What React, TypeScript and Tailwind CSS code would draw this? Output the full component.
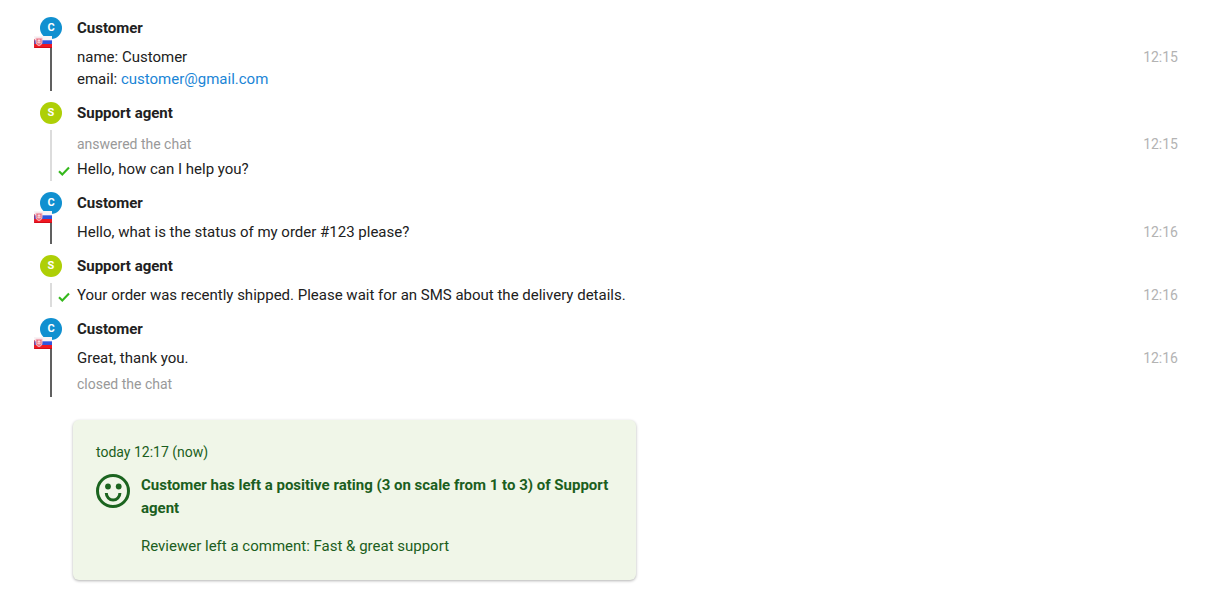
import type { ReactNode } from 'react';
import clsx from 'clsx';

type Row = {
  text: ReactNode;
  event?: boolean;
  delivered?: boolean;
};

type Group = {
  author: 'customer' | 'agent';
  time: string;
  rows: Row[];
};

const groups: Group[] = [
  {
    author: 'customer',
    time: '12:15',
    rows: [
      {
        text: (
          <>
            name: Customer
            <br />
            email:{' '}
            <a href="mailto:customer@gmail.com" className="text-[#1a85d6]">
              customer@gmail.com
            </a>
          </>
        ),
      },
    ],
  },
  {
    author: 'agent',
    time: '12:15',
    rows: [
      { text: 'answered the chat', event: true },
      { text: 'Hello, how can I help you?', delivered: true },
    ],
  },
  {
    author: 'customer',
    time: '12:16',
    rows: [{ text: 'Hello, what is the status of my order #123 please?' }],
  },
  {
    author: 'agent',
    time: '12:16',
    rows: [
      {
        text: 'Your order was recently shipped. Please wait for an SMS about the delivery details.',
        delivered: true,
      },
    ],
  },
  {
    author: 'customer',
    time: '12:16',
    rows: [{ text: 'Great, thank you.' }, { text: 'closed the chat', event: true }],
  },
];

function SlovakFlag() {
  return (
    <svg
      viewBox="0 0 18 12"
      className="absolute -left-1.5 top-[19px] h-3 w-[18px]"
      aria-hidden="true"
    >
      <rect width="18" height="4" fill="#f8f4f6" />
      <rect y="4" width="18" height="4" fill="#2f55dd" />
      <rect y="4" width="18" height="1" fill="#6d88ea" />
      <rect y="8" width="18" height="4" fill="#f01822" />
      <rect y="11" width="18" height="1" fill="#d20c18" />
      <rect y="3" width="1" height="9" fill="#d82840" opacity=".6" />
      <path d="M1.500 1.800h7v4.200c0 2.200-1.500 3.400-3.500 4.200-2-.8-3.500-2-3.500-4.200z" fill="#f2b9c4" />
      <path d="M2.500 2.800h5v3.400c0 1.400-1 2.300-2.500 3-1.500-.7-2.500-1.600-2.500-3z" fill="#ea7484" />
      <path d="M5 3v4.500M3.600 4.500h2.800M3.200 6.200h3.600" stroke="#fbe6ea" strokeWidth=".8" />
    </svg>
  );
}

function Check() {
  return (
    <svg viewBox="0 0 12 10" className="absolute -left-[19px] top-[9px] h-2.5 w-3" aria-label="Delivered">
      <path d="M1 5.200 4.300 8.400 11 1.500" fill="none" stroke="#35b81c" strokeWidth="2.100" />
    </svg>
  );
}

function Smiley() {
  return (
    <svg viewBox="0 0 34 34" className="h-[34px] w-[34px] shrink-0" fill="none" aria-hidden="true">
      <circle cx="17" cy="17" r="15.500" stroke="#1b641f" strokeWidth="3" />
      <circle cx="12" cy="12.500" r="2.900" fill="#1b641f" />
      <circle cx="22.700" cy="12.500" r="2.900" fill="#1b641f" />
      <path d="M10.300 19c0 3.900 3 7.100 6.800 7.100s6.800-3.200 6.800-7.100" stroke="#1b641f" strokeWidth="3" />
    </svg>
  );
}

function MessageGroup({ author, time, rows }: Group) {
  const isCustomer = author === 'customer';
  return (
    <section className="flex gap-[15px]">
      <div className={clsx('relative flex w-[22px] flex-col items-center', !isCustomer && 'gap-1.5')}>
        <div
          className={clsx(
            'flex h-[22px] w-[22px] items-center justify-center rounded-full text-[11px] font-bold text-white',
            isCustomer ? 'bg-[#1090d0]' : 'bg-[#aecf06]',
          )}
        >
          {isCustomer ? 'C' : 'S'}
        </div>
        <div className={clsx('w-0.5 flex-1', isCustomer ? 'bg-[#606060]' : 'bg-[#dcdcdc]')} />
        {isCustomer && <SlovakFlag />}
      </div>
      <div className="min-w-0 flex-1">
        <h2 className="mb-1.5 font-bold">{isCustomer ? 'Customer' : 'Support agent'}</h2>
        {rows.map((row, i) => (
          <div
            key={i}
            className={clsx('relative flex justify-between gap-4', row.event ? 'pt-[3px] pb-0.5' : 'py-px')}
          >
            {row.delivered && <Check />}
            <p className={clsx(row.event && 'text-sm/[22px] text-[#999999]')}>{row.text}</p>
            {i === 0 && <time className="text-sm/[22px] text-[#b3b3b3]">{time}</time>}
          </div>
        ))}
      </div>
    </section>
  );
}

export default function App() {
  return (
    <main className="min-h-screen bg-white pt-[17px] pr-[31px] pb-3.5 pl-10 font-['Roboto',sans-serif] text-[15px]/[22px] text-[#212121]">
      <div className="flex flex-col gap-[11px]">
        {groups.map((group, i) => (
          <MessageGroup key={i} {...group} />
        ))}
      </div>
      <article className="mt-[23px] ml-[33px] max-w-[563px] rounded-md bg-[#f0f6e8] px-[23px] py-[22px] text-[#1b5e20] shadow-[0_1px_3px_rgba(0,0,0,0.3)]">
        <p className="text-sm/5">today 12:17 (now)</p>
        <div className="mt-3 flex gap-[11px]">
          <Smiley />
          <div className="leading-[23px]">
            <p className="font-bold">
              Customer has left a positive rating (3 on scale from 1 to 3) of Support agent
            </p>
            <p className="mt-[15px]">Reviewer left a comment: Fast &amp; great support</p>
          </div>
        </div>
      </article>
    </main>
  );
}
